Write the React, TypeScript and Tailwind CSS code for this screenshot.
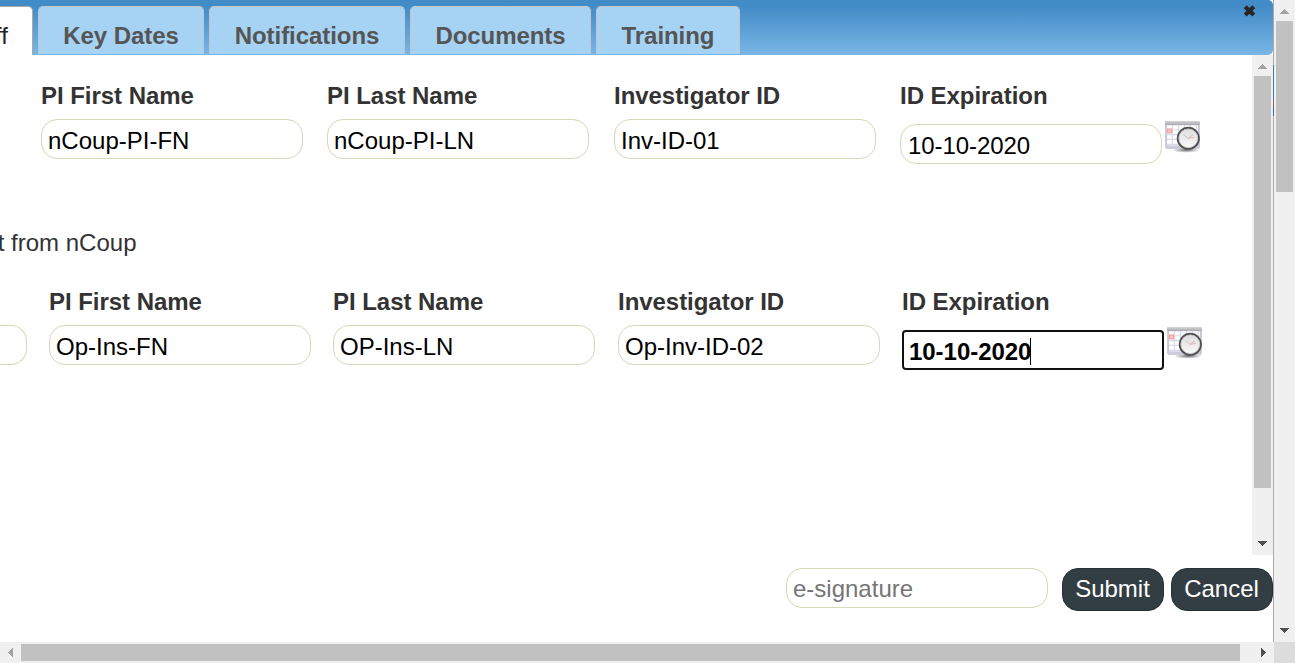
type FieldProps = { label: string; value: string; className: string; focused?: boolean; picker?: boolean };

function CalendarClock() {
  return (
    <svg width="37" height="33" viewBox="0 0 37 33" className="shrink-0">
      <defs>
        <linearGradient id="sheet" x1="0" y1="0" x2="0" y2="1">
          <stop offset="0" stopColor="#ffffff" />
          <stop offset="1" stopColor="#c9c9da" />
        </linearGradient>
        <linearGradient id="bar" x1="0" y1="0" x2="0" y2="1">
          <stop offset="0" stopColor="#d6d6d8" />
          <stop offset="1" stopColor="#a9a9b0" />
        </linearGradient>
        <linearGradient id="face" x1="0" y1="0" x2="0" y2="1">
          <stop offset="0" stopColor="#dcdcdc" />
          <stop offset="1" stopColor="#fbfbfb" />
        </linearGradient>
        <radialGradient id="shade">
          <stop offset="0" stopColor="#444" stopOpacity="0.8" />
          <stop offset="1" stopColor="#555" stopOpacity="0" />
        </radialGradient>
      </defs>
      <ellipse cx="22" cy="30" rx="14" ry="2.8" fill="url(#shade)" />
      <rect x="1.5" y="1.5" width="34" height="27" rx="1.5" fill="#c6c6d4" stroke="#cfcfda" strokeWidth="1" />
      <rect x="1" y="1" width="35" height="4" rx="1" fill="url(#bar)" />
      <rect x="3" y="5" width="31" height="21.5" fill="#dadae8" />
      <path d="M3 7.3H34M3 12H34M3 17H34M3 21.8H34" stroke="#fdfdff" strokeWidth="3.7" strokeDasharray="4.8 1.2" />
      <rect x="3.6" y="9" width="4" height="3.8" fill="#fbc5bf" stroke="#f29b92" strokeWidth="1" />
      <circle cx="24.3" cy="18.3" r="10.6" fill="url(#face)" stroke="#505050" strokeWidth="1.9" />
      <circle cx="24.3" cy="18.3" r="9.3" fill="none" stroke="#c8c8c8" strokeWidth="0.8" />
      <path d="M19.5 14.5L24 18.3L29 14.8" fill="none" stroke="#bdbdbd" strokeWidth="0.9" />
      <path d="M24 18.3L30 17.4" stroke="#e9aaa5" strokeWidth="0.8" />
    </svg>
  );
}

function Field({ label, value, className, focused, picker }: FieldProps) {
  return (
    <div className={className}>
      <div className="h-7 whitespace-nowrap text-[24px] leading-7 font-bold tracking-[-0.04px] text-[#333]">{label}</div>
      <div className="flex">
        <div
          className={
            focused
              ? "mt-[14px] flex h-10 w-[262px] shrink-0 items-center rounded-[4px] border-2 border-[#101010] bg-white pt-1 pl-[5px] text-[24px] leading-7 font-bold tracking-[-0.04px] text-black"
              : picker
                ? "mt-[14px] flex h-10 w-[262px] shrink-0 items-center rounded-[16px] border border-[#d6d8b6] pt-1 pl-[7px] text-[24px] leading-7 tracking-[-0.08px] text-black"
                : "mt-[9px] flex h-10 w-[262px] shrink-0 items-center rounded-[16px] border border-[#d6d8b6] pt-1 pl-[6px] text-[24px] leading-7 text-black"
          }
        >
          <span className="whitespace-nowrap">{value}</span>
          {focused && <span className="-mt-px -ml-px h-[27px] w-px bg-black" />}
        </div>
        {picker && <div className="mt-[10px] ml-[2px]"><CalendarClock /></div>}
      </div>
    </div>
  );
}

function Arrow({ points, color }: { points: string; color: string }) {
  return (
    <svg width="21" height="21" viewBox="0 0 21 21" className="shrink-0" shapeRendering="crispEdges">
      <polygon points={points} fill={color} />
    </svg>
  );
}

const UP = "6,14 10.5,9 15,14";
const DOWN = "6,7 15,7 10.5,12";
const LEFT = "13,6 8,10.5 13,15";
const RIGHT = "8,6 13,10.5 8,15";

function Tab({ label, className }: { label: string; className: string }) {
  return (
    <div className={`flex h-[48px] shrink-0 items-center justify-center rounded-t-[5px] border border-b-0 border-[#c5c5c5] bg-[#a6d2f3] pt-[11px] text-[24px] leading-7 font-bold tracking-[-0.06px] whitespace-nowrap text-[#555] ${className}`}>
      {label}
    </div>
  );
}

export default function App() {
  return (
    <div className="flex h-[663px] w-[1295px] overflow-hidden bg-white font-['Liberation_Sans',Arial,sans-serif]">
      <div className="flex w-[1274px] shrink-0 flex-col">
        <div className="flex h-[642px]">
          <div className="flex w-[1273px] flex-col bg-white">
            <header className="flex h-[55px] rounded-r-[5px] bg-linear-to-b from-[#418bc7] from-10% to-[#79b6e5] pt-[6px]">
              <div className="flex h-[49px] w-[33px] shrink-0 justify-end overflow-hidden rounded-tr-[5px] border-t border-r border-[#aaa] bg-white pt-[15px] pr-[24px] text-[24px] leading-7 text-[#212121]">
                <span>Staff</span>
              </div>
              <Tab label="Key Dates" className="ml-[5px] w-[166px]" />
              <Tab label="Notifications" className="ml-[5px] w-[196px]" />
              <Tab label="Documents" className="ml-[5px] w-[181px]" />
              <Tab label="Training" className="ml-[5px] w-[144px]" />
              <svg width="14" height="14" viewBox="0 0 14 14" className="-mt-[2px] mr-[17px] ml-auto">
                <path d="M3.2 2.7L11.8 10.9M11.8 2.7L3.2 10.9" stroke="#262626" strokeWidth="4.2" strokeLinecap="butt" />
              </svg>
            </header>

            <div className="flex h-[500px]">
              <main className="w-[1252px] overflow-hidden pt-[27px]">
                <section className="flex h-[147px] pl-[41px]">
                  <Field label="PI First Name" value="nCoup-PI-FN" className="w-[286px] shrink-0" />
                  <Field label="PI Last Name" value="nCoup-PI-LN" className="w-[287px] shrink-0" />
                  <Field label="Investigator ID" value="Inv-ID-01" className="w-[286px] shrink-0" />
                  <Field label="ID Expiration" value="10-10-2020" className="w-[310px] shrink-0" picker />
                </section>
                <div className="flex h-[59px] w-[136.5px] justify-end text-[24px] leading-7 whitespace-nowrap text-[#333]">
                  <p>t from nCoup</p>
                </div>
                <section className="flex">
                  <div className="mt-[37px] mr-[22px] h-10 w-[27px] shrink-0 rounded-r-[16px] border border-l-0 border-[#d6d8b6]" />
                  <Field label="PI First Name" value="Op-Ins-FN" className="w-[284px] shrink-0" />
                  <Field label="PI Last Name" value="OP-Ins-LN" className="w-[285px] shrink-0" />
                  <Field label="Investigator ID" value="Op-Inv-ID-02" className="w-[284px] shrink-0" />
                  <Field label="ID Expiration" value="10-10-2020" className="w-[310px] shrink-0" focused picker />
                </section>
              </main>
              <div className="flex w-[21px] shrink-0 flex-col bg-[#f0f0f0]">
                <Arrow points={UP} color="#a3a3a3" />
                <div className="mx-[2px] h-[412px] bg-[#c1c1c1]" />
                <div className="mt-auto h-[21px]"><Arrow points={DOWN} color="#505050" /></div>
              </div>
            </div>

            <footer className="flex items-start justify-end pt-[13px] text-[24px] leading-7">
              <div className="flex h-10 w-[262px] items-center rounded-[16px] border border-[#d6d8b6] pt-px pl-[6px] text-[#757575]">e-signature</div>
              <button className="ml-[14px] h-[43px] w-[102px] rounded-[16px] border border-[#26323a] bg-[#333d44] pr-px pb-[2px] text-white">Submit</button>
              <button className="ml-[7px] h-[43px] w-[102px] rounded-[16px] border border-[#26323a] bg-[#333d44] pr-px pb-[2px] text-white">Cancel</button>
            </footer>
          </div>
          <div className="flex w-px flex-col bg-[#aaa]">
            <div className="mt-[65px] h-[34px] bg-[#3e7fa8]" />
            <div className="h-[8px] bg-[#875f71]" />
            <div className="h-[9px] bg-[#376e92]" />
          </div>
        </div>
        <div className="flex h-[21px] w-[1274px] bg-[#f0f0f0]">
          <Arrow points={LEFT} color="#a3a3a3" />
          <div className="mt-[2px] h-[17px] w-[1219px] bg-[#c1c1c1]" />
          <div className="ml-auto h-[21px]"><Arrow points={RIGHT} color="#505050" /></div>
        </div>
      </div>
      <div className="flex w-[21px] shrink-0 flex-col bg-[#f0f0f0]">
        <Arrow points={UP} color="#a3a3a3" />
        <div className="mr-[2px] ml-[2px] h-[171px] bg-[#c1c1c1]" />
        <div className="mt-auto h-[21px]"><Arrow points={DOWN} color="#505050" /></div>
        <div className="h-[21px] shrink-0 bg-[#dcdcdc]" />
      </div>
    </div>
  );
}
